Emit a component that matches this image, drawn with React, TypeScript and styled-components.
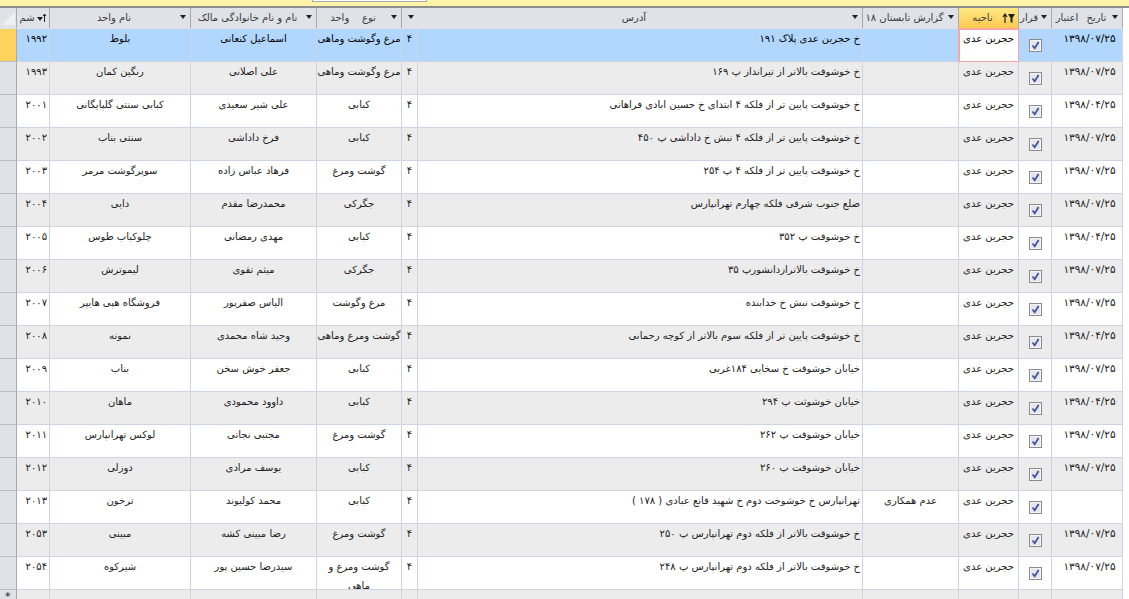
import { createGlobalStyle, styled } from "styled-components";

const COLUMNS = "17px 33px 141px 126px 85px 16px 445px 96px 60px 33px 71px";

const GlobalStyle = createGlobalStyle`
  html, body {
    margin: 0;
    height: 100%;
    overflow: hidden;
    background: #fff;
  }
  body {
    font-family: "DejaVu Sans", "Noto Sans", sans-serif;
    font-size: 10px;
    color: #222;
  }
`;

const Page = styled.div`
  width: 1129px;
  height: 599px;
  overflow: hidden;
  display: flex;
  flex-direction: column;
`;

/* yellow message bar over the sheet */
const MessageBar = styled.div`
  height: 6px;
  flex: none;
  background: #fdf3a9;
  border-bottom: 2px solid #8d8d8d;
  padding-left: 312px;
`;

const SearchBox = styled.div`
  width: 113px;
  height: 1px;
  background: #fff;
  border: 1px solid #a9a9a9;
  border-top: 0;
`;

const Sheet = styled.div`
  width: 1123px;
  display: flex;
  flex-direction: column;
`;

const HeaderRow = styled.div`
  display: grid;
  grid-template-columns: ${COLUMNS};
  height: 20px;
  flex: none;
  background: #dfe2e7;
  border-bottom: 1px solid #dfe2e7;
`;

const HeaderCell = styled.div<{ $active?: boolean; $wide?: boolean }>`
  position: relative;
  display: flex;
  align-items: center;
  justify-content: center;
  padding: 0 14px 2px 2px;
  box-sizing: border-box;
  overflow: hidden;
  white-space: pre;
  direction: rtl;
  color: #3a3a3a;
  word-spacing: ${(p) => (p.$wide ? "5px" : "normal")};
  border-right: 1px solid #a6abb2;
  background: ${(p) => (p.$active ? "linear-gradient(#ffe985, #fdc94f)" : "#dfe2e7")};
`;

const Corner = styled.div`
  border-right: 1px solid #a6abb2;
  display: flex;
  align-items: flex-end;
  justify-content: flex-end;
  padding: 0 1px 3px 0;
`;

const Arrow = styled.span`
  position: absolute;
  right: 4px;
  top: 7px;
  width: 0;
  height: 0;
  border-top: 4px solid #222;
  border-left: 3px solid transparent;
  border-right: 3px solid transparent;
`;

const SortIcon = styled.svg`
  position: absolute;
  right: 2px;
  top: 5px;
`;

const Row = styled.div`
  display: grid;
  grid-template-columns: ${COLUMNS};
  height: 33px;
  flex: none;
`;

const Selector = styled.div<{ $current?: boolean }>`
  background: ${(p) => (p.$current ? "#fdd35e" : "#dfe2e7")};
  border-right: 1px solid #a6abb2;
  border-bottom: 1px solid #b9bdc4;
  font-size: 11px;
  padding-left: 5px;
`;

const Cell = styled.div<{ $tone: string; $side?: string; $focused?: boolean }>`
  box-sizing: border-box;
  min-width: 0;
  overflow: hidden;
  direction: rtl;
  padding: 0 2px;
  line-height: 19px;
  text-align: ${(p) => p.$side ?? "center"};
  background: ${(p) => (p.$focused ? "#fff" : p.$tone)};
  color: ${(p) => (p.$tone === "#b1d7ff" ? "#000" : "#222")};
  border-right: 1px solid #cdd5e5;
  border-bottom: 1px solid #cdd5e5;
  ${(p) => p.$focused && "outline: 2px solid #f9a6a6; outline-offset: -1px;"}
`;

const KindCell = styled(Cell)`
  padding: 0;
  white-space: pre-line;
`;

const DateCell = styled(Cell)`
  font-size: 10.5px;
  letter-spacing: 0.4px;
  padding-left: 5px;
  padding-right: 0;
`;

const CheckCell = styled(Cell)`
  display: flex;
  justify-content: center;
  padding-top: 10px;
`;

const Check = styled.svg`
  display: block;
  margin-left: 1px;
`;

const Checkbox = () => (
  <Check width="13" height="13" viewBox="0 0 13 13">
    <rect x="0.5" y="0.5" width="12" height="12" fill="#e4e6ea" stroke="#8b8b8b" />
    <rect x="1.5" y="1.5" width="10" height="10" fill="none" stroke="#f5f5f5" />
    <path d="M3.5 6.5 L5.7 9.3 L9.6 3" fill="none" stroke="#3f4f9f" strokeWidth="1.7" />
  </Check>
);

type Shop = {
  id: string;
  name: string;
  owner: string;
  kind: string;
  address: string;
  report?: string;
  date?: string;
};

const shops: Shop[] = [
  { id: "۱۹۹۲", name: "بلوط", owner: "اسماعیل کنعانی", kind: "مرغ وگوشت وماهی", address: "خ حجرین عدی پلاک ۱۹۱", date: "۱۳۹۸/۰۷/۲۵" },
  { id: "۱۹۹۳", name: "رنگین کمان", owner: "علی اصلانی", kind: "مرغ وگوشت وماهی", address: "خ خوشوقت بالاتر از تیرانداز پ ۱۶۹", date: "۱۳۹۸/۰۷/۲۵" },
  { id: "۲۰۰۱", name: "کبابی سنتی گلپایگانی", owner: "علی  شیر سعیدی", kind: "کبابی", address: "خ خوشوقت پایین تر از فلکه ۴ ابتدای خ حسین ابادی فراهانی", date: "۱۳۹۸/۰۴/۲۵" },
  { id: "۲۰۰۲", name: "سنتی بناب", owner: "فرخ داداشی", kind: "کبابی", address: "خ خوشوقت پایین تر از فلکه ۴ نبش خ داداشی پ ۴۵۰", date: "۱۳۹۸/۰۷/۲۵" },
  { id: "۲۰۰۳", name: "سوپرگوشت مرمر", owner: "فرهاد عباس زاده", kind: "گوشت ومرغ", address: "خ خوشوقت پایین تر از فلکه ۴ پ ۲۵۴", date: "۱۳۹۸/۰۷/۲۵" },
  { id: "۲۰۰۴", name: "دایی", owner: "محمدرضا مقدم", kind: "جگرکی", address: "ضلع جنوب شرقی فلکه چهارم تهرانپارس", date: "۱۳۹۸/۰۷/۲۵" },
  { id: "۲۰۰۵", name: "چلوکباب طوس", owner: "مهدی رمضانی", kind: "کبابی", address: "خ خوشوقت پ ۳۵۲", date: "۱۳۹۸/۰۴/۲۵" },
  { id: "۲۰۰۶", name: "لیموترش", owner: "میثم تقوی", kind: "جگرکی", address: "خ خوشوقت بالاترازدانشورپ ۳۵", date: "۱۳۹۸/۰۷/۲۵" },
  { id: "۲۰۰۷", name: "فروشگاه هپی هایپر", owner: "الیاس صفرپور", kind: "مرغ وگوشت", address: "خ خوشوقت نبش خ خدابنده", date: "۱۳۹۸/۰۷/۲۵" },
  { id: "۲۰۰۸", name: "نمونه", owner: "وحید شاه محمدی", kind: "گوشت ومرغ وماهی", address: "خ خوشوقت پایین تر از فلکه سوم بالاتر از کوچه رحمانی", date: "۱۳۹۸/۰۴/۲۵" },
  { id: "۲۰۰۹", name: "بناب", owner: "جعفر خوش سخن", kind: "کبابی", address: "خیابان خوشوقت خ سخایی ۱۸۴غربی", date: "۱۳۹۸/۰۷/۲۵" },
  { id: "۲۰۱۰", name: "ماهان", owner: "داوود محمودی", kind: "کبابی", address: "خیابان خوشوثت پ ۲۹۴", date: "۱۳۹۸/۰۴/۲۵" },
  { id: "۲۰۱۱", name: "لوکس تهرانپارس", owner: "مجتبی نجاتی", kind: "گوشت ومرغ", address: "خیابان خوشوقت پ ۲۶۲", date: "۱۳۹۸/۰۷/۲۵" },
  { id: "۲۰۱۲", name: "دوزلی", owner: "یوسف مرادی", kind: "کبابی", address: "خیابان خوشوقت پ ۲۶۰", date: "۱۳۹۸/۰۷/۲۵" },
  { id: "۲۰۱۳", name: "ترخون", owner: "محمد کولیوند", kind: "کبابی", address: "تهرانپارس خ خوشوخت دوم خ شهید قانع عبادی ( ۱۷۸ )", report: "عدم همکاری" },
  { id: "۲۰۵۳", name: "مبینی", owner: "رضا مبینی کشه", kind: "گوشت ومرغ", address: "خ خوشوقت بالاتر از فلکه دوم تهرانپارس پ ۲۵۰", date: "۱۳۹۸/۰۷/۲۵" },
  { id: "۲۰۵۴", name: "شیرکوه", owner: "سیدرضا حسین پور", kind: "گوشت ومرغ و\nماهی", address: "خ خوشوقت بالاتر از فلکه دوم تهرانپارس پ ۲۴۸", date: "۱۳۹۸/۰۷/۲۵" },
];

const headers = ["نام واحد", "نام و نام خانوادگی مالک", "نوع    واحد", "", "آدرس", "گزارش تابستان ۱۸"];

const toneFor = (idx: number) => {
  if (idx === 0) return "#b1d7ff";
  return idx % 2 === 1 ? "#ececec" : "#fff";
};

const App = () => {
  return (
    <Page>
      <GlobalStyle />
      <MessageBar>
        <SearchBox />
      </MessageBar>
      <Sheet>
        <HeaderRow>
          <Corner>
            <svg width="13" height="13" viewBox="0 0 13 13">
              <polygon points="13,0 13,13 0,13" fill="#eef0f3" />
            </svg>
          </Corner>
          <HeaderCell>
            شم
            <SortIcon width="10" height="10" viewBox="0 0 10 10">
              <path d="M7.5 9 V1 M6 3 L7.5 1 L9 3" fill="none" stroke="#222" />
              <polygon points="0,4 6,4 3,8" fill="#222" />
            </SortIcon>
          </HeaderCell>
          {headers.map((title, idx) => (
            <HeaderCell key={idx}>
              {title}
              <Arrow />
            </HeaderCell>
          ))}
          <HeaderCell $active>
            ناحیه
            <SortIcon width="14" height="11" viewBox="0 0 14 11">
              <path d="M3 10 V1 M1 4 L3 1 L5 4" fill="none" stroke="#222" strokeWidth="1.2" />
              <polygon points="6,1 13,1 10.5,5 10.5,10 8.5,9 8.5,5" fill="#222" />
            </SortIcon>
          </HeaderCell>
          <HeaderCell>
            قرار
            <Arrow />
          </HeaderCell>
          <HeaderCell $wide>
            تاریخ اعتبار
            <Arrow />
          </HeaderCell>
        </HeaderRow>
        {shops.map((shop, idx) => {
          const tone = toneFor(idx);
          return (
            <Row key={shop.id}>
              <Selector $current={idx === 0} />
              <Cell $tone={tone} $side="right">{shop.id}</Cell>
              <Cell $tone={tone}>{shop.name}</Cell>
              <Cell $tone={tone}>{shop.owner}</Cell>
              <KindCell $tone={tone}>{shop.kind}</KindCell>
              <Cell $tone={tone}>۴</Cell>
              <Cell $tone={tone} $side="right">{shop.address}</Cell>
              <Cell $tone={tone}>{shop.report}</Cell>
              <Cell $tone={tone} $focused={idx === 0}>حجرین عدی</Cell>
              <CheckCell $tone={tone}>
                <Checkbox />
              </CheckCell>
              <DateCell $tone={tone}>{shop.date}</DateCell>
            </Row>
          );
        })}
        <Row>
          <Selector>*</Selector>
          {Array.from({ length: 10 }, (_, idx) => (
            <Cell key={idx} $tone="#ececec" />
          ))}
        </Row>
      </Sheet>
    </Page>
  );
};

export default App;
